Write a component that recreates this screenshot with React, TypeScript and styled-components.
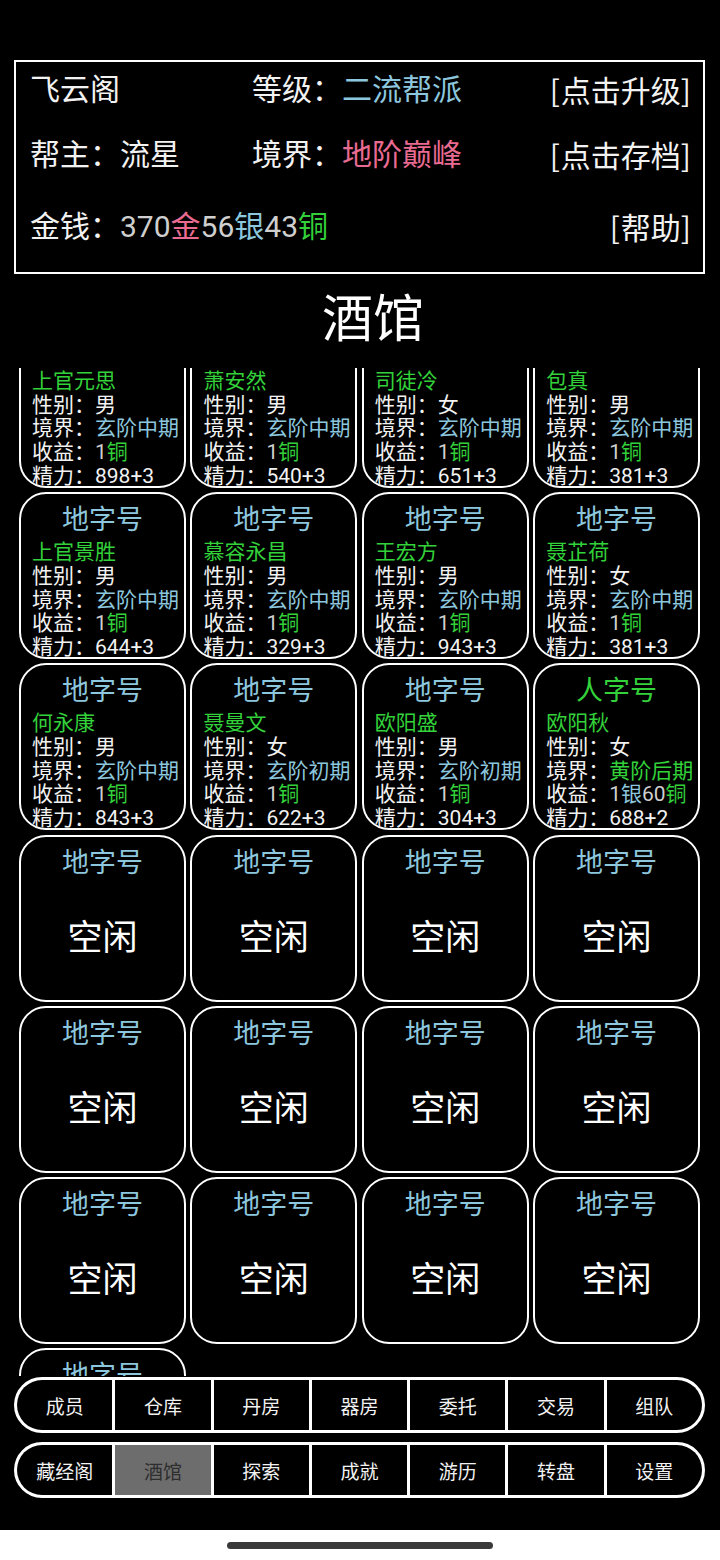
import React, { useLayoutEffect, useRef } from 'react';
import styled, { createGlobalStyle } from 'styled-components';

const GREEN = '#33d13a';
const BLUE = '#8cc7de';
const PINK = '#e96b91';
const GREY = '#cfcfcf';

const GlobalStyle = createGlobalStyle`
  html, body {
    margin: 0;
    padding: 0;
    background: #000;
  }
  body {
    font-family: Roboto, "Noto Sans CJK SC", "Noto Sans", sans-serif;
    color: #f2f2f2;
  }
`;

const Page = styled.div`
  width: 720px;
  height: 1560px;
  display: flex;
  flex-direction: column;
  background: #000;
  overflow: hidden;
`;

const InfoBox = styled.div`
  margin: 60px 15px 0 14px;
  border: 2px solid #fff;
  padding: 2px 11px 12px 14px;
  display: grid;
  grid-template-columns: 222px 1fr auto;
  grid-template-rows: 52px 78px 66px;
  align-items: center;
  font-size: 30px;
  line-height: 40px;
`;

const Cell = styled.div<{ $right?: boolean; $wide?: boolean }>`
  white-space: nowrap;
  text-align: ${(p) => (p.$right ? 'right' : 'left')};
  grid-column: ${(p) => (p.$wide ? '1 / 3' : 'auto')};
`;

const Bracket = styled.span`
  font-family: "Noto Sans CJK SC", sans-serif;
  letter-spacing: 1px;
`;

const Tint = styled.span<{ $c: string }>`
  color: ${(p) => p.$c};
`;

const Title = styled.div`
  height: 94px;
  padding-left: 26px;
  font-size: 51px;
  line-height: 92px;
  text-align: center;
  color: #fff;
`;

const Scroller = styled.div`
  height: 1008px;
  overflow: hidden;
`;

const Grid = styled.div`
  display: grid;
  grid-template-columns: repeat(4, 1fr);
  grid-auto-rows: 167px;
  gap: 4.2px 4.6px;
  padding: 0 20px 0 19px;
`;

const Card = styled.div`
  border: 2px solid #fff;
  border-radius: 27px;
  padding: 8px 0 0 11px;
  box-sizing: border-box;
  display: flex;
  flex-direction: column;
`;

const Rank = styled.div<{ $c: string }>`
  font-size: 27px;
  line-height: 36px;
  text-align: center;
  margin-left: -11px;
  color: ${(p) => p.$c};
`;

const Line = styled.div`
  font-size: 21px;
  line-height: 23.7px;
  white-space: nowrap;
  &:nth-of-type(2) {
    margin-top: 3px;
  }
`;

const Idle = styled.div`
  font-size: 35px;
  line-height: 50px;
  margin-top: 33px;
  margin-left: -11px;
  text-align: center;
  color: #fff;
`;

const Nav = styled.div`
  margin: 1px 15px 0 14px;
  display: flex;
  flex-direction: column;
  gap: 9px;
`;

const NavRow = styled.div`
  height: 56px;
  box-sizing: border-box;
  border: 3px solid #fff;
  border-radius: 28px;
  overflow: hidden;
  background: #fff;
  display: grid;
  grid-template-columns: repeat(7, 1fr);
  gap: 3px;
`;

const NavBtn = styled.div<{ $active?: boolean }>`
  background: ${(p) => (p.$active ? '#6d6d6d' : '#000')};
  color: ${(p) => (p.$active ? '#2e2e2e' : '#f2f2f2')};
  font-size: 19px;
  display: flex;
  align-items: center;
  justify-content: center;
`;

const SysBar = styled.div`
  margin-top: auto;
  height: 30px;
  background: #fff;
  display: flex;
  align-items: center;
  justify-content: center;
`;

const HomePill = styled.div`
  width: 266px;
  height: 7px;
  border-radius: 4px;
  background: #3a3a3a;
`;

type Hero = {
  rank: string;
  rankColor: string;
  name: string;
  sex: string;
  realm: string;
  realmColor: string;
  income: React.ReactNode;
  energy: string;
};

const copper = (
  <>
    <Tint $c={GREY}>1</Tint>
    <Tint $c={GREEN}>铜</Tint>
  </>
);

const h = (name: string, sex: string, realm: string, energy: string): Hero => ({
  rank: '地字号',
  rankColor: BLUE,
  name,
  sex,
  realm,
  realmColor: BLUE,
  income: copper,
  energy,
});

const heroes: Hero[] = [
  h('上官元思', '男', '玄阶中期', '898+3'),
  h('萧安然', '男', '玄阶中期', '540+3'),
  h('司徒冷', '女', '玄阶中期', '651+3'),
  h('包真', '男', '玄阶中期', '381+3'),
  h('上官景胜', '男', '玄阶中期', '644+3'),
  h('慕容永昌', '男', '玄阶中期', '329+3'),
  h('王宏方', '男', '玄阶中期', '943+3'),
  h('聂芷荷', '女', '玄阶中期', '381+3'),
  h('何永康', '男', '玄阶中期', '843+3'),
  h('聂曼文', '女', '玄阶初期', '622+3'),
  h('欧阳盛', '男', '玄阶初期', '304+3'),
  {
    rank: '人字号',
    rankColor: GREEN,
    name: '欧阳秋',
    sex: '女',
    realm: '黄阶后期',
    realmColor: GREEN,
    income: (
      <>
        <Tint $c={GREY}>1</Tint>
        <Tint $c={BLUE}>银</Tint>
        <Tint $c={GREY}>60</Tint>
        <Tint $c={GREEN}>铜</Tint>
      </>
    ),
    energy: '688+2',
  },
];

const idleCount = 13;

const navTop = ['成员', '仓库', '丹房', '器房', '委托', '交易', '组队'];
const navBottom = ['藏经阁', '酒馆', '探索', '成就', '游历', '转盘', '设置'];

function HeroCard({ hero }: { hero: Hero }) {
  return (
    <Card>
      <Rank $c={hero.rankColor}>{hero.rank}</Rank>
      <Line>
        <Tint $c={GREEN}>{hero.name}</Tint>
      </Line>
      <Line>性别：{hero.sex}</Line>
      <Line>
        境界：<Tint $c={hero.realmColor}>{hero.realm}</Tint>
      </Line>
      <Line>收益：{hero.income}</Line>
      <Line>精力：{hero.energy}</Line>
    </Card>
  );
}

const Action = ({ label }: { label: string }) => (
  <Cell $right>
    <Bracket>[</Bracket>
    {label}
    <Bracket>]</Bracket>
  </Cell>
);

export default function App() {
  const scrollRef = useRef<HTMLDivElement>(null);

  // the list is shown scrolled a little past its first row
  useLayoutEffect(() => {
    if (scrollRef.current) scrollRef.current.scrollTop = 47;
  }, []);

  return (
    <Page>
      <GlobalStyle />
      <InfoBox>
        <Cell>飞云阁</Cell>
        <Cell>
          等级：<Tint $c={BLUE}>二流帮派</Tint>
        </Cell>
        <Action label="点击升级" />
        <Cell>帮主：流星</Cell>
        <Cell>
          境界：<Tint $c={PINK}>地阶巅峰</Tint>
        </Cell>
        <Action label="点击存档" />
        <Cell $wide>
          金钱：<Tint $c={GREY}>370</Tint>
          <Tint $c={PINK}>金</Tint>
          <Tint $c={GREY}>56</Tint>
          <Tint $c={BLUE}>银</Tint>
          <Tint $c={GREY}>43</Tint>
          <Tint $c={GREEN}>铜</Tint>
        </Cell>
        <Action label="帮助" />
      </InfoBox>

      <Title>酒馆</Title>

      <Scroller ref={scrollRef}>
        <Grid>
          {heroes.map((hero) => (
            <HeroCard key={hero.name} hero={hero} />
          ))}
          {Array.from({ length: idleCount }).map((_, i) => (
            <Card key={'idle' + i}>
              <Rank $c={BLUE}>地字号</Rank>
              <Idle>空闲</Idle>
            </Card>
          ))}
        </Grid>
      </Scroller>

      <Nav>
        <NavRow>
          {navTop.map((t) => (
            <NavBtn key={t}>{t}</NavBtn>
          ))}
        </NavRow>
        <NavRow>
          {navBottom.map((t) => (
            <NavBtn key={t} $active={t === '酒馆'}>
              {t}
            </NavBtn>
          ))}
        </NavRow>
      </Nav>

      <SysBar>
        <HomePill />
      </SysBar>
    </Page>
  );
}
